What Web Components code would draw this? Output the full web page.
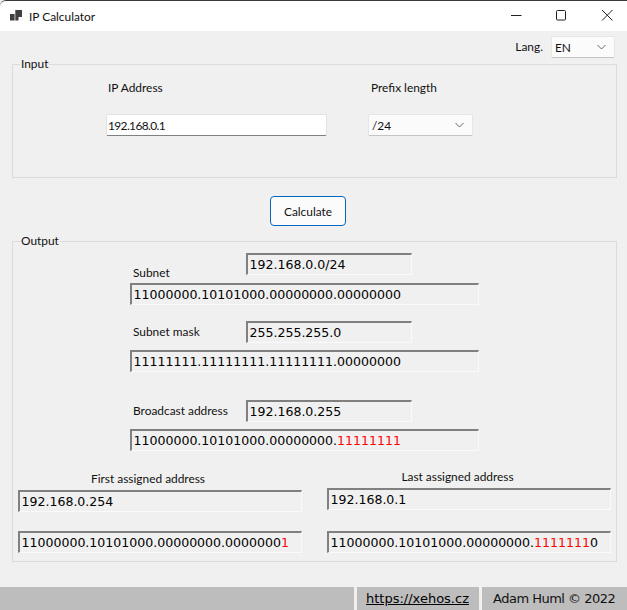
<!DOCTYPE html>
<html lang="en"><head><meta charset="utf-8"><title>IP Calculator</title>
<style>
html,body{margin:0;padding:0;background:#f0f0f0}
body{--ui:11.900px Lato,"Noto Sans",sans-serif;font:var(--ui);color:#000;width:627px;height:610px;overflow:hidden}
</style></head><body>
<template id="t-window"><style>
:host{display:flex;flex-direction:column;width:627px;height:610px;background:#f0f0f0}
main{flex:1;display:flex;flex-direction:column;padding:0 10px 0 12px}
.lang{display:flex;justify-content:flex-end;align-items:flex-start;gap:8px;height:28px;margin-right:2px;padding-top:5px}
.lang win-label{margin-top:3px}
.gap{display:flex;justify-content:center;padding:18px 13px 15px 0}
</style>
<title-bar></title-bar>
<main>
<div class="lang"><win-label>Lang.</win-label><combo-box style="--w:64px;--h:22px">EN</combo-box></div>
<slot name="input"></slot>
<div class="gap"><win-button>Calculate</win-button></div>
<slot name="output"></slot>
</main>
<status-bar></status-bar>
</template>

<template id="t-title"><style>
:host{display:flex;align-items:center;height:30px;background:#fff;border-top:1px solid #3a3a3a;border-top-left-radius:6px;padding:0 0 0 10px;font:var(--ui)}
span{margin-left:7px;color:#111}
svg{display:block;flex:none}
.ctl{margin-left:auto;display:flex}
.ctl svg{width:46px;height:30px}
</style>
<svg width="12" height="12" viewBox="0 0 12 12"><path fill="#404040" d="M0 4h4.600v6.500H0zM5.300 0H12v7H8.500v3.500H5.300z"/></svg>
<span>IP Calculator</span>
<div class="ctl">
<svg viewBox="0 0 46 30"><path d="M22 14.500h10.500" stroke="#222" fill="none"/></svg>
<svg viewBox="0 0 46 30"><rect x="21.500" y="9.500" width="9" height="9.500" rx="1" stroke="#222" fill="none"/></svg>
<svg viewBox="0 0 46 30"><path d="M21 9l10.500 10.500M31.500 9L21 19.500" stroke="#222" fill="none"/></svg>
</div></template>

<template id="t-label"><style>:host{display:block;font:var(--ui);line-height:16px;color:#111;white-space:nowrap}</style><slot></slot></template>

<template id="t-combo"><style>
:host{display:flex;align-items:center;box-sizing:border-box;width:var(--w);height:var(--h);background:#fbfbfb;border:1px solid #e6e6e6;border-bottom:1px solid #c4c4c4;border-radius:2px;padding:0 8px 0 3px;font:var(--ui);color:#111;justify-content:space-between}
svg{flex:none}
</style><slot></slot><svg width="9" height="6" viewBox="0 0 9 6"><path d="M.5 1l4 4 4-4" stroke="#666" fill="none"/></svg></template>

<template id="t-text"><style>
:host{display:flex;align-items:center;box-sizing:border-box;width:221px;height:22px;background:#fff;border:1px solid #e2e2e2;border-bottom:1px solid #808080;border-radius:2px;padding:0 1px;font:var(--ui);letter-spacing:-.6px;color:#111}
</style><slot></slot></template>

<template id="t-button"><style>
:host{display:flex;align-items:center;justify-content:center;box-sizing:border-box;width:76px;height:30px;background:#fbfbfb;border:1px solid #0067c0;border-radius:4px;font:var(--ui);color:#111}
</style><slot></slot></template>

<template id="t-group"><style>
:host{display:block;box-sizing:border-box;position:relative;width:605px;border:1px solid #dcdcdc}
.legend{position:absolute;left:7px;top:-9px;padding:0 1px;background:#f0f0f0;font:var(--ui);line-height:16px;color:#111}
</style><div class="legend"><slot name="legend"></slot></div><slot></slot></template>

<template id="t-value"><style>
:host{display:flex;align-items:center;box-sizing:border-box;height:22px;background:#f0f0f0;border-style:solid;border-width:2px 1px 1px 2px;border-color:#808080 #fafafa #fafafa #808080;padding:0 0 1px 1.500px;font:12.550px "DejaVu Sans",sans-serif;color:#000;white-space:nowrap}
</style><slot></slot></template>

<template id="t-input"><style>
:host{display:block;height:112px}
.g{display:grid;grid-template-columns:221px 105px;column-gap:41px;padding:15px 0 0 93px}
.g win-label{margin-left:2px}
.lb{grid-row:1}
.c{grid-row:2;margin-top:18px}
</style>
<div class="g">
<win-label class="lb">IP Address</win-label>
<win-label class="lb" style="margin-left:3px">Prefix length</win-label>
<text-box class="c">192.168.0.1</text-box>
<combo-box class="c" style="--w:105px;--h:22px">/24</combo-box>
</div></template>

<template id="t-output"><style>
:host{display:flow-root;height:319px}
.row{display:grid;grid-template-columns:116px 166px;align-items:center;margin-left:117px}
.bin{width:349px;margin-left:117px}
.addr{display:grid;grid-template-columns:284px 284px;column-gap:25px;margin:14px 0 0 5px}
.addr win-label{text-align:center}
.col{display:flex;flex-direction:column}
</style>
<div class="row" style="margin-top:11px"><win-label style="align-self:start;margin:12px 0 -6px 3px">Subnet</win-label><value-box>192.168.0.0/24</value-box></div>
<value-box class="bin" style="margin-top:8px">11000000.10101000.00000000.00000000</value-box>
<div class="row" style="margin-top:16px"><win-label style="margin-left:3px">Subnet mask</win-label><value-box>255.255.255.0</value-box></div>
<value-box class="bin" style="margin-top:7px">11111111.11111111.11111111.00000000</value-box>
<div class="row" style="margin-top:28px"><win-label style="margin-left:3px">Broadcast address</win-label><value-box>192.168.0.255</value-box></div>
<value-box class="bin" style="margin-top:7px">11000000.10101000.00000000.<span style="color:#f00">11111111</span></value-box>
<div class="addr">
<div class="col"><win-label style="margin:6px 0 3px;padding-right:24px">First assigned address</win-label><value-box>192.168.0.254</value-box><value-box style="margin-top:19px">11000000.10101000.00000000.0000000<span style="color:#f00">1</span></value-box></div>
<div class="col"><win-label style="margin:4px 0 3px;padding-right:23px">Last assigned address</win-label><value-box>192.168.0.1</value-box><value-box style="margin-top:21px">11000000.10101000.00000000.<span style="color:#f00">1111111</span>0</value-box></div>
</div></template>

<template id="t-status"><style>
:host{display:grid;grid-template-columns:354px 122px 145px;column-gap:3px;height:23px;background:#f0f0f0;font:13px/23px "DejaVu Sans",sans-serif;color:#111}
div{background:#bdbdbd;white-space:nowrap}
a{color:#000;text-decoration:underline;padding-left:9px}
.c{padding-left:11px;letter-spacing:-.5px}
</style><div></div><div><a>https://xehos.cz</a></div><div class="c">Adam Huml © 2022</div></template>

<ip-window>
<group-box slot="input"><span slot="legend">Input</span><input-panel></input-panel></group-box>
<group-box slot="output"><span slot="legend">Output</span><output-panel></output-panel></group-box>
</ip-window>
<script>
const defs={'ip-window':'t-window','title-bar':'t-title','win-label':'t-label','combo-box':'t-combo','text-box':'t-text','win-button':'t-button','group-box':'t-group','value-box':'t-value','input-panel':'t-input','output-panel':'t-output','status-bar':'t-status'};
for(const [name,id] of Object.entries(defs)){
  customElements.define(name,class extends HTMLElement{
    constructor(){super();this.attachShadow({mode:'open'}).appendChild(document.getElementById(id).content.cloneNode(true));}
  });
}
</script>
</body></html>
